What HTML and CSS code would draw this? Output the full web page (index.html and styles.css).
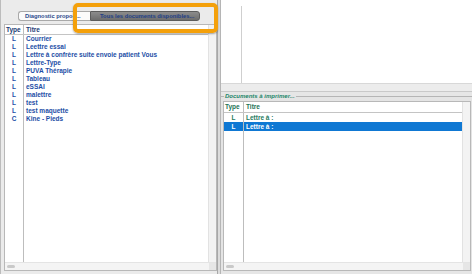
FILE: index.html
```html
<!DOCTYPE html>
<html lang="fr">
<head>
  <meta charset="UTF-8">
  <title>Documents</title>
  <link rel="stylesheet" href="styles.css">
</head>
<body>
  <div class="window">
    <section class="left">
      <div class="tabs">
        <span class="tab">Diagnostic propos...</span>
        <span class="tab active">Tous les documents disponibles...</span>
      </div>
      <div class="listbox">
        <div class="list-main">
          <div class="list-inner">
            <div class="row head"><span class="type">Type</span><span class="title">Titre</span></div>
            <div class="row"><span class="type">L</span><span class="title">Courrier</span></div>
            <div class="row"><span class="type">L</span><span class="title">Leettre essai</span></div>
            <div class="row"><span class="type">L</span><span class="title">Lettre à confrère suite envoie patient Vous</span></div>
            <div class="row"><span class="type">L</span><span class="title">Lettre-Type</span></div>
            <div class="row"><span class="type">L</span><span class="title">PUVA Thérapie</span></div>
            <div class="row"><span class="type">L</span><span class="title">Tableau</span></div>
            <div class="row"><span class="type">L</span><span class="title">eSSAI</span></div>
            <div class="row"><span class="type">L</span><span class="title">malettre</span></div>
            <div class="row"><span class="type">L</span><span class="title">test</span></div>
            <div class="row"><span class="type">L</span><span class="title">test maquette</span></div>
            <div class="row"><span class="type">C</span><span class="title">Kine - Pieds</span></div>
            <div class="filler"><span class="type"></span><span class="title"></span></div>
          </div>
          <div class="vscroll"></div>
        </div>
        <div class="hscroll"><span class="thumb"></span><span class="corner"></span></div>
      </div>
      <div class="highlight"></div>
    </section>

    <div class="splitter"></div>

    <section class="right">
      <div class="preview"><div class="preview-line"></div></div>
      <div class="band"></div>
      <fieldset class="group">
        <legend>Documents à imprimer...</legend>
        <div class="listbox green">
          <div class="list-main">
            <div class="list-inner">
              <div class="row head"><span class="type">Type</span><span class="title">Titre</span></div>
              <div class="row"><span class="type">L</span><span class="title">Lettre à :</span></div>
              <div class="row selected"><span class="type">L</span><span class="title">Lettre à :</span></div>
              <div class="filler"><span class="type"></span><span class="title"></span></div>
            </div>
            <div class="vscroll"></div>
          </div>
          <div class="hscroll"><span class="thumb"></span><span class="corner"></span></div>
        </div>
      </fieldset>
    </section>
  </div>
</body>
</html>
```

FILE: styles.css
```css
html, body {
  margin: 0;
  padding: 0;
}

body {
  width: 472px;
  height: 274px;
  overflow: hidden;
  background: #e6e6e6;
  font-family: 'Liberation Sans', Arial, sans-serif;
  font-weight: bold;
  font-size: 6.5px;
}

.window {
  display: flex;
  height: 274px;
}

/* left pane */

.left {
  position: relative;
  width: 213px;
  display: flex;
  flex-direction: column;
  padding: 0 0 3px 3px;
  border-left: 1px solid #bcbcbc;
  background: #ebebeb;
}

.tabs {
  height: 24px;
  display: flex;
  align-items: flex-start;
  padding: 11px 0 0 14px;
  box-sizing: border-box;
  font-size: 5.8px;
}

.tab {
  height: 8px;
  line-height: 8px;
  padding: 0 0 0 6px;
  width: 65px;
  background: #fbfbfb;
  border: 1px solid #a9a9a9;
  border-right: none;
  border-radius: 3px 0 0 3px;
  color: #2b4a8c;
  white-space: nowrap;
  overflow: hidden;
}

.tab.active {
  width: auto;
  padding: 0 5px 0 9px;
  background: linear-gradient(#8c8c8c, #6d6d6d);
  border: 1px solid #5c5c5c;
  border-radius: 0 3px 3px 0;
  color: #1f3f86;
  overflow: visible;
}

.listbox {
  flex: 1;
  display: flex;
  flex-direction: column;
  background: #fff;
  border: 1px solid #b8b8b8;
  color: #1d4ea6;
}

.list-main {
  flex: 1;
  display: flex;
}

.list-inner {
  flex: 1;
  display: flex;
  flex-direction: column;
}

.row {
  display: flex;
  height: 8px;
  line-height: 8px;
  white-space: nowrap;
}

.row.head {
  height: 9px;
  line-height: 9px;
  border-bottom: 1px solid #c4c4c4;
  color: #203c74;
}

.type {
  width: 18px;
  flex: none;
  text-align: center;
  border-right: 1px solid #bdbdbd;
}

.head .type {
  text-align: left;
  padding-left: 1px;
  width: 17px;
}

.title {
  padding-left: 2px;
}

.filler {
  flex: 1;
  display: flex;
}

.vscroll {
  width: 7px;
  background: #f3f3f3;
  border-left: 1px solid #e2e2e2;
}

.hscroll {
  position: relative;
  height: 7px;
  background: #f4f4f4;
  border-top: 1px solid #e4e4e4;
  display: flex;
  align-items: center;
  justify-content: space-between;
}

.hscroll .thumb {
  width: 8px;
  height: 3px;
  margin-left: 2px;
  border-radius: 2px;
  background: #c9c9c9;
}

.hscroll .corner {
  width: 7px;
  height: 7px;
  background: #e6e6e6;
}

.highlight {
  position: absolute;
  left: 72px;
  top: 3px;
  width: 137px;
  height: 22px;
  border: 4px solid #f4a00a;
  border-radius: 5px;
  box-shadow: 0 1px 2px rgba(0, 0, 0, 0.35);
}

/* splitter */

.splitter {
  width: 2px;
  background: #dcdcdc;
  border-left: 1px solid #a8a8a8;
  border-right: 1px solid #b5b5b5;
}

/* right pane */

.right {
  flex: 1;
  display: flex;
  flex-direction: column;
  padding-bottom: 3px;
}

.preview {
  height: 84px;
  background: #fff;
  padding: 6px 0 0 20px;
  box-sizing: border-box;
  border-bottom: 1px solid #d8d8d8;
}

.preview-line {
  width: 1px;
  height: 100%;
  background: #cfcfcf;
}

.band {
  height: 7px;
  background: #ececec;
  border-bottom: 1px solid #c9c9c9;
}

.group {
  flex: 1;
  display: flex;
  flex-direction: column;
  margin: 0;
  padding: 0;
  border: none;
  border-top: 1px solid #b5b5b5;
  background: #e4e4e4;
  margin-top: 1px;
}

.group legend {
  padding: 0 1px;
  margin-left: 3px;
  font-style: italic;
  color: #23876a;
  font-size: 6px;
  line-height: 6px;
}

.group .listbox {
  margin: 2px 1px 0 2px;
  color: #1f7b5d;
}

.group .row {
  height: 9px;
  line-height: 9px;
}

.group .row.head {
  height: 10px;
  line-height: 10px;
  color: #1d7457;
}

.group .type {
  width: 19px;
}

.group .head .type {
  width: 18px;
}

.row.selected {
  background: #0f78d3;
  color: #fff;
}
```
